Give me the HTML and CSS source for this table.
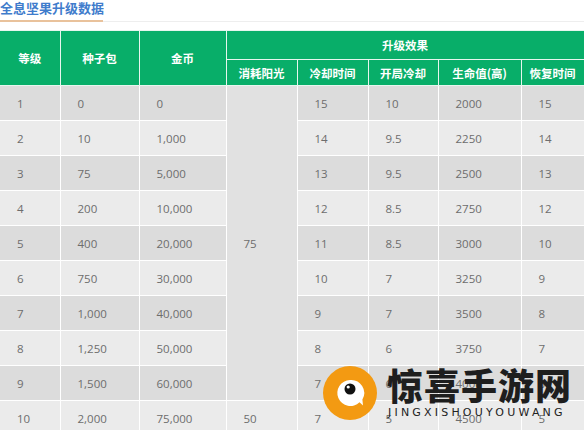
FILE: index.html
```html
<!DOCTYPE html>
<html lang="zh">
<head>
<meta charset="utf-8">
<link rel="stylesheet" href="styles.css">
</head>
<body>
<div class="page">
  <div class="title-bar"><h2 class="title">全息坚果升级数据</h2></div>
  <table class="data">
    <colgroup>
      <col class="c1"><col class="c2"><col class="c3"><col class="c4"><col class="c5"><col class="c6"><col class="c7"><col class="c8">
    </colgroup>
    <thead>
      <tr class="h1">
        <th rowspan="2">等级</th>
        <th rowspan="2">种子包</th>
        <th rowspan="2">金币</th>
        <th colspan="5">升级效果</th>
      </tr>
      <tr class="h2">
        <th>消耗阳光</th>
        <th>冷却时间</th>
        <th>开局冷却</th>
        <th>生命值(高)</th>
        <th>恢复时间</th>
      </tr>
    </thead>
    <tbody>
      <tr class="odd"><td>1</td><td>0</td><td>0</td><td rowspan="9" class="merged">75</td><td>15</td><td>10</td><td>2000</td><td>15</td></tr>
      <tr class="even"><td>2</td><td>10</td><td>1,000</td><td>14</td><td>9.5</td><td>2250</td><td>14</td></tr>
      <tr class="odd"><td>3</td><td>75</td><td>5,000</td><td>13</td><td>9.5</td><td>2500</td><td>13</td></tr>
      <tr class="even"><td>4</td><td>200</td><td>10,000</td><td>12</td><td>8.5</td><td>2750</td><td>12</td></tr>
      <tr class="odd"><td>5</td><td>400</td><td>20,000</td><td>11</td><td>8.5</td><td>3000</td><td>10</td></tr>
      <tr class="even"><td>6</td><td>750</td><td>30,000</td><td>10</td><td>7</td><td>3250</td><td>9</td></tr>
      <tr class="odd"><td>7</td><td>1,000</td><td>40,000</td><td>9</td><td>7</td><td>3500</td><td>8</td></tr>
      <tr class="even"><td>8</td><td>1,250</td><td>50,000</td><td>8</td><td>6</td><td>3750</td><td>7</td></tr>
      <tr class="odd"><td>9</td><td>1,500</td><td>60,000</td><td>7</td><td>6</td><td>4000</td><td>6</td></tr>
      <tr class="even"><td>10</td><td>2,000</td><td>75,000</td><td>50</td><td>7</td><td>5</td><td>4500</td><td>5</td></tr>
    </tbody>
  </table>
  <div class="watermark">
    <svg class="wm-logo" width="56" height="56" viewBox="0 0 56 56">
      <circle cx="28" cy="28" r="27" fill="#f39a12"/>
      <path d="M28 15 a13 13 0 1 0 9.5 22.2 l3.5 3.3 l-0.6 -6 A13 13 0 0 0 28 15 z" fill="#fff"/>
      <circle cx="28" cy="24" r="5.5" fill="#111"/>
      <circle cx="26.2" cy="22" r="1.6" fill="#fff"/>
    </svg>
    <div class="wm-text">
      <div class="wm-cn">惊喜手游网</div>
      <div class="wm-en">JINGXISHOUYOUWANG</div>
    </div>
  </div>
</div>
</body>
</html>
```
FILE: styles.css
```css
html, body {
  margin: 0;
  padding: 0;
  background: #fff;
  overflow: hidden;
}
.page {
  position: relative;
  width: 584px;
  height: 430px;
  overflow: hidden;
  font-family: "Open Sans", "Noto Sans CJK SC", sans-serif;
}
.title-bar {
  height: 21px;
  border-bottom: 1px solid #eeeeee;
  position: relative;
}
.title-bar::after {
  content: "";
  position: absolute;
  left: 0;
  bottom: -1px;
  width: 103px;
  height: 2px;
  background: #e9c29c;
}
.title {
  margin: 0;
  font-size: 13px;
  line-height: 16px;
  font-weight: 700;
  color: #3f7ccc;
  font-family: "Noto Sans CJK SC", sans-serif;
}
.data {
  margin-top: 8px;
  border-collapse: collapse;
  table-layout: fixed;
  width: 584px;
  font-size: 11.5px;
}
.c1 { width: 60px; }
.c2 { width: 79px; }
.c3 { width: 87px; }
.c4 { width: 71px; }
.c5 { width: 71px; }
.c6 { width: 70px; }
.c7 { width: 83px; }
.c8 { width: 63px; }
.data th {
  background: #08ae69;
  color: #fff;
  font-weight: 700;
  font-family: "Noto Sans CJK SC", sans-serif;
  font-size: 11.5px;
  border: 1px solid #e6f6ee;
  padding: 0;
  text-align: center;
}
.data tr.h1 th { height: 28px; }
.data tr.h2 th { height: 25px; }
.data td {
  height: 34px;
  padding: 0 0 0 17px;
  border: 1px solid #fff;
  color: #6d6d6d;
  text-align: left;
}
.data tr.odd td { background: #dcdcdc; }
.data tr.even td { background: #ebebeb; }
.data td.merged {
  background: #e1e1e1 !important;
}
.data tr:first-child td { border-top: 0; }
.data td:first-child, .data th:first-child { border-left: 0; }
.watermark {
  position: absolute;
  left: 322px;
  top: 365px;
  display: flex;
  align-items: flex-start;
  gap: 9px;
}
.wm-logo { flex: none; }
.wm-text {
  display: flex;
  flex-direction: column;
}
.wm-cn {
  font-family: "Noto Sans CJK SC", sans-serif;
  font-weight: 900;
  font-size: 36px;
  line-height: 38px;
  color: #1e1e1e;
  letter-spacing: 1px;
}
.wm-en {
  font-family: "DejaVu Sans", sans-serif;
  font-size: 11px;
  line-height: 14px;
  letter-spacing: 3.2px;
  color: #222;
  margin-top: 3px;
  margin-left: 1px;
}
```
